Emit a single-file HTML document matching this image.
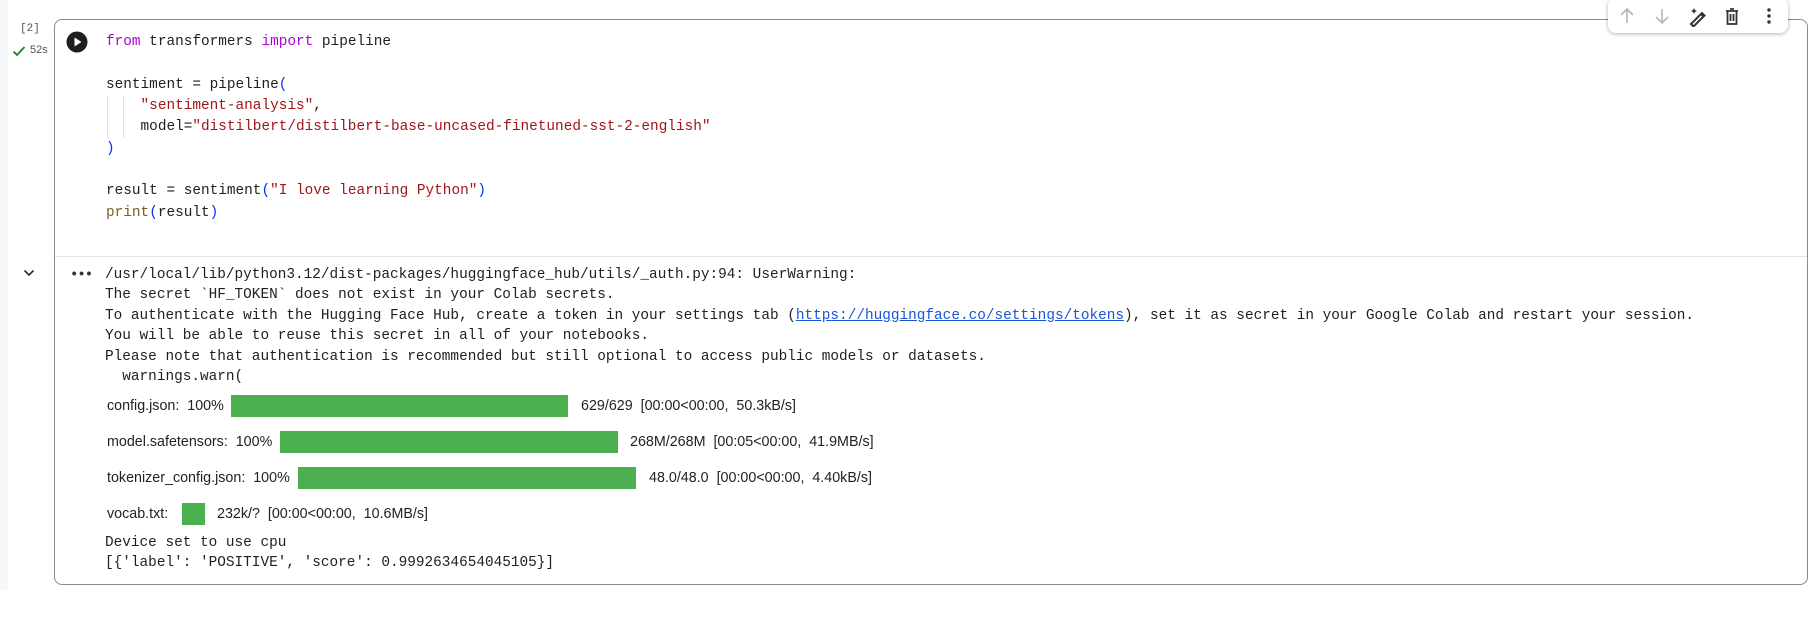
<!DOCTYPE html>
<html><head><meta charset="utf-8"><style>
*{margin:0;padding:0;box-sizing:border-box}
body{width:1810px;height:640px;background:#fff;position:relative;overflow:hidden;font-family:"Liberation Mono",monospace;color:#1f1f1f}
.side{position:absolute;left:0;top:0;width:8px;height:590px;background:#f6f8fb}
.cell{position:absolute;left:54px;top:19px;width:1754px;height:566px;border:1.5px solid #8a8a8a;border-radius:8px}
.sep{position:absolute;left:55px;top:256px;width:1752px;height:1px;background:#e3e3e3}
.l{position:absolute;font-size:14.4px;line-height:20px;white-space:pre;left:106px}
.k{color:#af00db}.s{color:#a31515}.p{color:#0431fa}.f{color:#795e26}
.o{position:absolute;left:105px;font-size:14.4px;line-height:20px;white-space:pre;color:#1f1f1f}
a{color:#1a55d8;text-decoration:underline}
.pr{position:absolute;font-family:"Liberation Sans",Arial,sans-serif;font-size:14.3px;color:#222;white-space:pre;line-height:22px}
.bar{position:absolute;background:#4caf50;height:22px}
.guide{position:absolute;width:1px;background:#ddd;top:96px;height:42px}
.tb{position:absolute;left:1608px;top:-2px;width:180px;height:35px;background:#fff;border-radius:8px;box-shadow:0 1px 4px rgba(0,0,0,.3)}
</style></head><body>
<div class="side"></div>
<div class="cell"></div>
<div class="sep"></div>
<div style="position:absolute;left:20px;top:23px;font-size:11px;color:#555">[2]</div>
<svg style="position:absolute;left:12px;top:45px" width="14" height="12" viewBox="0 0 14 12"><path d="M1.5 6.5 L5 10 L12.5 2" stroke="#188038" stroke-width="1.8" fill="none"/></svg>
<div style="position:absolute;left:30px;top:44px;font-family:'Liberation Sans',sans-serif;font-size:11px;color:#555">52s</div>
<svg style="position:absolute;left:66px;top:31px" width="22" height="22" viewBox="0 0 22 22"><circle cx="11" cy="11" r="10.5" fill="#1f1f1f"/><path d="M8.5 6.5 L15.5 11 L8.5 15.5Z" fill="#fff"/></svg>
<div class="guide" style="left:107px"></div><div class="guide" style="left:123px"></div>
<div class="l" style="top:32px"><span class="k">from</span> transformers <span class="k">import</span> pipeline</div>
<div class="l" style="top:75px">sentiment = pipeline<span class="p">(</span></div>
<div class="l" style="top:96px">    <span class="s">"sentiment-analysis"</span>,</div>
<div class="l" style="top:117px">    model=<span class="s">"distilbert/distilbert-base-uncased-finetuned-sst-2-english"</span></div>
<div class="l" style="top:139px"><span class="p">)</span></div>
<div class="l" style="top:181px">result = sentiment<span class="p">(</span><span class="s">"I love learning Python"</span><span class="p">)</span></div>
<div class="l" style="top:203px"><span class="f">print</span><span class="p">(</span>result<span class="p">)</span></div>
<div class="tb"></div>
<svg style="position:absolute;left:1617px;top:5px" width="200" height="22" viewBox="0 0 200 22">
<path d="M10 18V4M4 10l6-6 6 6" stroke="#b5b5b5" stroke-width="1.6" fill="none"/>
<path d="M45 4v14M39 12l6 6 6-6" stroke="#b5b5b5" stroke-width="1.6" fill="none"/>
<path d="M74 19l11-11 2.5 2.5-11 11zM84 9l2.5 2.5" stroke="#333" stroke-width="2" fill="none"/><path d="M77 3l1 2 2 1-2 1-1 2-1-2-2-1 2-1z" fill="#333"/>
<path d="M109 6h12M113 4h4M110.5 6v13h9V6M113.5 9v7M116.5 9v7" stroke="#333" stroke-width="1.8" fill="none"/>
<circle cx="152" cy="5" r="1.7" fill="#333"/><circle cx="152" cy="11" r="1.7" fill="#333"/><circle cx="152" cy="17" r="1.7" fill="#333"/>
</svg>
<svg style="position:absolute;left:23px;top:268px" width="12" height="10" viewBox="0 0 12 10"><path d="M1.5 2.5l4.5 4.5 4.5-4.5" stroke="#333" stroke-width="1.7" fill="none"/></svg>
<div style="position:absolute;left:70px;top:267px;font-size:14px;font-weight:bold;color:#333;letter-spacing:-1px">•••</div>
<div class="o" style="top:265px">/usr/local/lib/python3.12/dist-packages/huggingface_hub/utils/_auth.py:94: UserWarning:</div>
<div class="o" style="top:285px">The secret `HF_TOKEN` does not exist in your Colab secrets.</div>
<div class="o" style="top:306px">To authenticate with the Hugging Face Hub, create a token in your settings tab (<a>https://huggingface.co/settings/tokens</a>), set it as secret in your Google Colab and restart your session.</div>
<div class="o" style="top:326px">You will be able to reuse this secret in all of your notebooks.</div>
<div class="o" style="top:347px">Please note that authentication is recommended but still optional to access public models or datasets.</div>
<div class="o" style="top:367px">  warnings.warn(</div>
<div class="pr" style="left:107px;top:395px">config.json:  100%</div><div class="bar" style="left:231px;top:395px;width:337px"></div><div class="pr" style="left:581px;top:395px">629/629  [00:00&lt;00:00,  50.3kB/s]</div>
<div class="pr" style="left:107px;top:431px">model.safetensors:  100%</div><div class="bar" style="left:280px;top:431px;width:338px"></div><div class="pr" style="left:630px;top:431px">268M/268M  [00:05&lt;00:00,  41.9MB/s]</div>
<div class="pr" style="left:107px;top:467px">tokenizer_config.json:  100%</div><div class="bar" style="left:298px;top:467px;width:338px"></div><div class="pr" style="left:649px;top:467px">48.0/48.0  [00:00&lt;00:00,  4.40kB/s]</div>
<div class="pr" style="left:107px;top:503px">vocab.txt:</div><div class="bar" style="left:182px;top:503px;width:23px"></div><div class="pr" style="left:217px;top:503px">232k/?  [00:00&lt;00:00,  10.6MB/s]</div>
<div class="o" style="top:533px">Device set to use cpu</div>
<div class="o" style="top:553px">[{'label': 'POSITIVE', 'score': 0.9992634654045105}]</div>
</body></html>
